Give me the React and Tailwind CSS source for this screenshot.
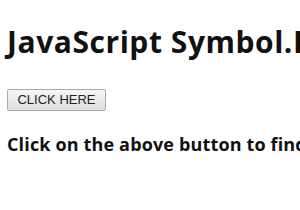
export default function App() {
  return (
    <div className="w-[300px] h-[210px] overflow-hidden bg-white text-black pl-[7px] pt-[22px]" style={{ fontFamily: '"Open Sans", sans-serif' }}>
      <h1 className="text-[30px] leading-[40px] font-bold tracking-[0.55px] whitespace-nowrap text-[#111]">JavaScript Symbol.RegExp</h1>
      <button className="block mt-[27px] h-[22px] w-[99px] border border-[#a9a9a9] rounded-[2px] bg-gradient-to-b from-[#f6f6f6] to-[#dedede] text-[13px] leading-[20px] text-[#222]" style={{ fontFamily: '"Liberation Sans", Arial, sans-serif' }}>
        CLICK HERE
      </button>
      <p className="mt-[21px] text-[18px] leading-[24px] font-bold tracking-[0.15px] whitespace-nowrap text-[#111]">Click on the above button to find the result</p>
    </div>
  );
}
